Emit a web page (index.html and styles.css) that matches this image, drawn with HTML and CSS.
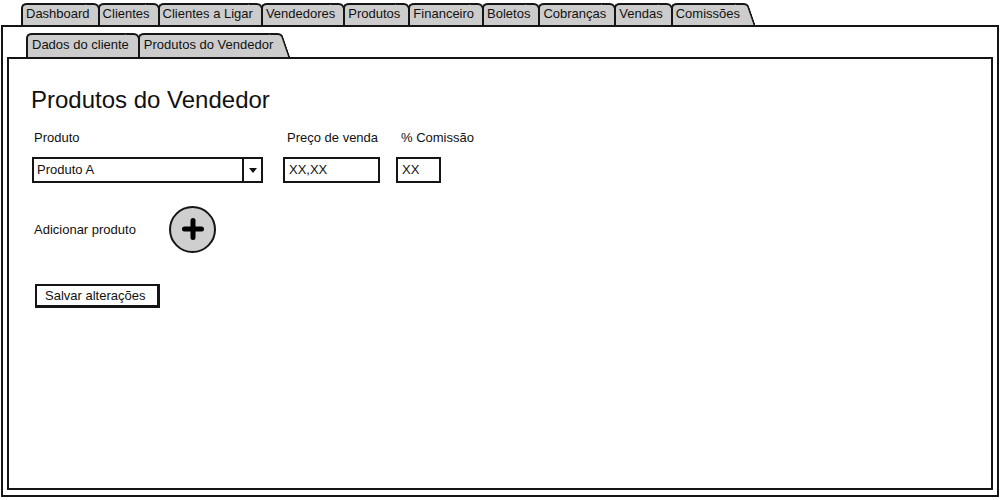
FILE: index.html
```html
<!DOCTYPE html>
<html lang="pt">
<head>
<meta charset="utf-8">
<title>Produtos do Vendedor</title>
<link rel="stylesheet" href="styles.css">
</head>
<body>
<nav class="tabs">
  <span class="tab"><span class="tab-text">Dashboard</span></span>
  <span class="tab"><span class="tab-text">Clientes</span></span>
  <span class="tab"><span class="tab-text">Clientes a Ligar</span></span>
  <span class="tab"><span class="tab-text">Vendedores</span></span>
  <span class="tab"><span class="tab-text">Produtos</span></span>
  <span class="tab"><span class="tab-text">Financeiro</span></span>
  <span class="tab"><span class="tab-text">Boletos</span></span>
  <span class="tab"><span class="tab-text">Cobranças</span></span>
  <span class="tab"><span class="tab-text">Vendas</span></span>
  <span class="tab"><span class="tab-text">Comissões</span></span>
</nav>
<section class="panel">
  <nav class="tabs subtabs">
    <span class="tab"><span class="tab-text">Dados do cliente</span></span>
    <span class="tab"><span class="tab-text">Produtos do Vendedor</span></span>
  </nav>
  <div class="inner">
    <h1 class="title">Produtos do Vendedor</h1>
    <div class="fields">
      <div class="field f-product">
        <label class="label">Produto</label>
        <div class="select">
          <span class="select-text">Produto A</span>
          <span class="select-btn"><span class="arrow"></span></span>
        </div>
      </div>
      <div class="field f-price">
        <label class="label">Preço de venda</label>
        <div class="input">XX,XX</div>
      </div>
      <div class="field f-comm">
        <label class="label">% Comissão</label>
        <div class="input">XX</div>
      </div>
    </div>
    <div class="add-row">
      <span class="add-label">Adicionar produto</span>
      <button class="add-btn" type="button" aria-label="Adicionar produto">
        <svg width="24" height="24" viewBox="0 0 24 24"><path d="M12 3.5 V20.5 M3.5 12 H20.5" stroke="#000" stroke-width="5" stroke-linecap="round"/></svg>
      </button>
    </div>
    <button class="save" type="button">Salvar alterações</button>
  </div>
</section>
</body>
</html>
```
FILE: styles.css
```css
* { box-sizing: border-box; }
html, body { margin: 0; padding: 0; background: #fff; }
body {
  width: 1000px;
  height: 500px;
  overflow: hidden;
  font-family: "Liberation Sans", Arial, sans-serif;
  color: #111;
}
.tabs {
  display: flex;
  padding: 3px 0 0 21px;
  height: 25px;
}
.tab {
  position: relative;
  height: 22px;
  line-height: 18px;
  font-size: 13px;
  padding: 0 4px 0 3px;
  margin-right: 4px;
  background: #cccccc;
  border-top: 2px solid #151515;
  border-left: 2px solid #151515;
  border-top-left-radius: 6px 5px;
  white-space: nowrap;
}
.tab::before {
  content: "";
  position: absolute;
  top: -2px;
  bottom: 0;
  left: calc(100% - 9px);
  width: 11px;
  background: #cccccc;
  border-top: 2px solid #151515;
  border-right: 2px solid #151515;
  border-top-right-radius: 5px 4px;
  transform: skewX(19deg);
  transform-origin: top left;
}
.tab-text { position: relative; }
.panel {
  margin: 0 1px;
  height: 472px;
  border: 2px solid #151515;
  padding: 4px 4px 5px 4px;
  display: flex;
  flex-direction: column;
}
.subtabs {
  padding: 2px 0 0 19px;
  height: 26px;
  flex: none;
}
.subtabs .tab {
  height: 24px;
  line-height: 20px;
  padding: 0 5px 0 4px;
}
.inner {
  flex: 1;
  border: 2px solid #151515;
  padding: 27px 0 0 22px;
}
.title {
  margin: 0;
  font-size: 24px;
  line-height: 28px;
  font-weight: normal;
}
.fields {
  display: flex;
  margin-top: 16px;
  margin-left: 1px;
}
.field { display: flex; flex-direction: column; }
.f-product { width: 231px; margin-right: 20px; }
.f-price { width: 97px; margin-right: 16px; }
.f-comm { width: 45px; }
.label {
  font-size: 13px;
  line-height: 16px;
  padding-left: 2px;
  white-space: nowrap;
  margin-bottom: 11px;
}
.f-price .label { padding-left: 4px; }
.f-comm .label { padding-left: 5px; }
.select, .input {
  height: 26px;
  border: 2px solid #151515;
  font-size: 13px;
  line-height: 22px;
  display: flex;
  background: #fff;
}
.select-text { flex: 1; padding-left: 3px; }
.select-btn {
  width: 19px;
  border-left: 2px solid #151515;
  display: flex;
  align-items: center;
  justify-content: center;
}
.arrow {
  width: 0; height: 0;
  border-left: 4px solid transparent;
  border-right: 4px solid transparent;
  border-top: 5px solid #111;
}
.input { padding-left: 4px; }
.add-row {
  display: flex;
  align-items: center;
  margin-top: 23px;
  margin-left: 3px;
  height: 46px;
}
.add-label { font-size: 13px; width: 135px; }
.add-btn {
  width: 47px;
  height: 47px;
  border-radius: 50%;
  border: 2px solid #151515;
  background: #cfcfcf;
  padding: 0;
  display: flex;
  align-items: center;
  justify-content: center;
}
.save {
  display: block;
  margin-top: 32px;
  margin-left: 4px;
  width: 125px;
  height: 24px;
  padding: 0 0 0 8px;
  text-align: left;
  font-family: inherit;
  font-size: 13px;
  color: #111;
  background: #fff;
  border: 2px solid #151515;
  border-right-width: 3px;
  border-bottom-width: 3px;
}
```
